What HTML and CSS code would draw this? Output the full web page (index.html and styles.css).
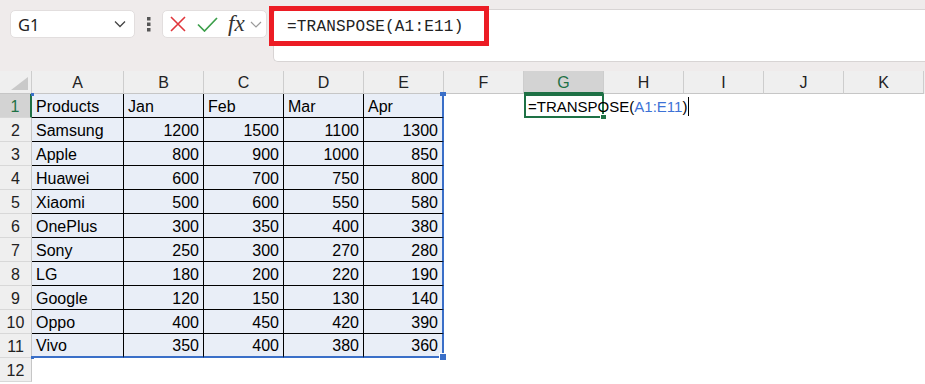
FILE: index.html
```html
<!DOCTYPE html>
<html>
<head>
  <title>Transpose Sheet</title>
  <link rel="stylesheet" href="styles.css">
</head>
<body>
  <div class="toolbar">
    <div class="namebox">
      <span>G1</span>
      <svg width="12" height="8" viewBox="0 0 12 8"><path d="M1 1.5 L6 6.5 L11 1.5" fill="none" stroke="#444" stroke-width="1.3"/></svg>
    </div>
    <div class="dots">
      <svg width="4" height="15" viewBox="0 0 4 15"><rect x="0" y="0" width="3.5" height="3.5" fill="#555"/><rect x="0" y="5.5" width="3.5" height="3.5" fill="#555"/><rect x="0" y="11" width="3.5" height="3.5" fill="#555"/></svg>
    </div>
    <div class="fxbox">
      <svg class="cancel" width="16" height="16" viewBox="0 0 16 16"><path d="M1 1 L15 15 M15 1 L1 15" stroke="#e0363c" stroke-width="1.6"/></svg>
      <svg class="enter" width="21" height="15" viewBox="0 0 21 15"><path d="M1 7.5 L7.5 14 L20 1" fill="none" stroke="#3c9f4b" stroke-width="1.7"/></svg>
      <span class="fx">fx</span>
      <svg class="more" width="12" height="7" viewBox="0 0 12 7"><path d="M1 1 L6 6 L11 1" fill="none" stroke="#9a9a9a" stroke-width="1.2"/></svg>
    </div>
    <div class="formula">
      <div class="ftext">=TRANSPOSE(A1:E11)</div>
      <div class="callout"></div>
    </div>
  </div>

  <div class="sheet">
    <div class="row head">
      <div class="corner"><svg width="17" height="13" viewBox="0 0 17 13"><path d="M17 0 L17 13 L0 13 Z" fill="#c9c9c9"/></svg></div>
      <div class="ch">A</div><div class="ch">B</div><div class="ch">C</div><div class="ch">D</div><div class="ch">E</div>
      <div class="ch">F</div><div class="ch sel">G</div><div class="ch">H</div><div class="ch">I</div><div class="ch">J</div><div class="ch">K</div>
    </div>

    <div class="row">
      <div class="rh sel">1</div>
      <div class="c r">Products<span class="hd tl"></span></div><div class="c r">Jan</div><div class="c r">Feb</div><div class="c r">Mar</div><div class="c r e">Apr<span class="hd tr"></span></div>
      <div class="c"></div>
      <div class="c g1">=TRANSPOSE(<span class="ref">A1:E11</span>)<span class="caret"></span><span class="ghandle"></span></div>
    </div>
    <div class="row">
      <div class="rh">2</div>
      <div class="c r">Samsung</div><div class="c r n">1200</div><div class="c r n">1500</div><div class="c r n">1100</div><div class="c r e n">1300</div>
    </div>
    <div class="row">
      <div class="rh">3</div>
      <div class="c r">Apple</div><div class="c r n">800</div><div class="c r n">900</div><div class="c r n">1000</div><div class="c r e n">850</div>
    </div>
    <div class="row">
      <div class="rh">4</div>
      <div class="c r">Huawei</div><div class="c r n">600</div><div class="c r n">700</div><div class="c r n">750</div><div class="c r e n">800</div>
    </div>
    <div class="row">
      <div class="rh">5</div>
      <div class="c r">Xiaomi</div><div class="c r n">500</div><div class="c r n">600</div><div class="c r n">550</div><div class="c r e n">580</div>
    </div>
    <div class="row">
      <div class="rh">6</div>
      <div class="c r">OnePlus</div><div class="c r n">300</div><div class="c r n">350</div><div class="c r n">400</div><div class="c r e n">380</div>
    </div>
    <div class="row">
      <div class="rh">7</div>
      <div class="c r">Sony</div><div class="c r n">250</div><div class="c r n">300</div><div class="c r n">270</div><div class="c r e n">280</div>
    </div>
    <div class="row">
      <div class="rh">8</div>
      <div class="c r">LG</div><div class="c r n">180</div><div class="c r n">200</div><div class="c r n">220</div><div class="c r e n">190</div>
    </div>
    <div class="row">
      <div class="rh">9</div>
      <div class="c r">Google</div><div class="c r n">120</div><div class="c r n">150</div><div class="c r n">130</div><div class="c r e n">140</div>
    </div>
    <div class="row">
      <div class="rh">10</div>
      <div class="c r">Oppo</div><div class="c r n">400</div><div class="c r n">450</div><div class="c r n">420</div><div class="c r e n">390</div>
    </div>
    <div class="row last">
      <div class="rh">11</div>
      <div class="c r">Vivo<span class="hd bl"></span></div><div class="c r n">350</div><div class="c r n">400</div><div class="c r n">380</div><div class="c r e n">360<span class="hd br"></span></div>
    </div>
    <div class="row">
      <div class="rh">12</div>
    </div>
  </div>
</body>
</html>
```

FILE: styles.css
```css
body {
  margin: 0;
  width: 925px;
  height: 384px;
  overflow: hidden;
  background: #fff;
  font-family: "Liberation Sans", Arial, sans-serif;
  color: #000;
}

/* formula bar */
.toolbar {
  display: flex;
  align-items: flex-start;
  height: 71px;
  box-sizing: border-box;
  padding: 10px 0 0 10px;
  background: #efebeb;
}

.namebox {
  width: 125px;
  height: 28px;
  box-sizing: border-box;
  display: flex;
  align-items: center;
  justify-content: space-between;
  padding: 0 8px 0 7px;
  background: #fff;
  border: 1px solid #e2dede;
  border-radius: 5px;
  font-family: "Noto Sans", sans-serif;
  font-size: 16.5px;
  color: #222;
}

.dots {
  width: 27px;
  height: 28px;
  display: flex;
  align-items: center;
  justify-content: center;
}

.fxbox {
  width: 105px;
  height: 28px;
  box-sizing: border-box;
  display: flex;
  align-items: center;
  padding-left: 7px;
  background: #fff;
  border: 1px solid #e2dede;
  border-radius: 5px;
}

.fxbox .enter {
  margin-left: 11px;
}

.fxbox .fx {
  margin-left: 10px;
  font-family: "Liberation Serif", serif;
  font-style: italic;
  font-size: 23px;
  line-height: 20px;
  color: #333;
}

.fxbox .more {
  margin-left: 5px;
}

.formula {
  position: relative;
  flex: 1;
  height: 53px;
  margin: -1px 0 0 6px;
  box-sizing: border-box;
  background: #fff;
  border: 1px solid #d8d4d4;
  border-right: none;
  border-radius: 5px 0 0 5px;
}

.ftext {
  padding: 7px 0 0 13px;
  font-family: "Liberation Mono", monospace;
  font-size: 16px;
  letter-spacing: 0.2px;
  line-height: 20px;
  color: #222;
}

.callout {
  position: absolute;
  left: -5px;
  top: -4px;
  width: 220px;
  height: 40px;
  box-sizing: border-box;
  border: 5px solid #ec1c24;
}

/* grid */
.row {
  display: grid;
  grid-template-columns: 32px 92px repeat(10, 80px);
  grid-template-rows: 24px;
  height: 24px;
}

.row.head {
  grid-template-rows: 23px;
  height: 23px;
  background: #efefef;
}

.corner,
.ch {
  box-sizing: border-box;
  border-right: 1px solid #cdcdcd;
  border-bottom: 1px solid #c6c6c6;
}

.corner {
  display: flex;
  align-items: flex-end;
  justify-content: flex-end;
  padding: 0 3px 3px 0;
}

.ch {
  padding-top: 1px;
  text-align: center;
  line-height: 21px;
  font-size: 16px;
  color: #222;
}

.ch.sel {
  background: #d3d3d3;
  color: #1e7145;
  border-bottom: 2px solid #1e7145;
}

.rh {
  box-sizing: border-box;
  padding-top: 2px;
  background: #efefef;
  border-right: 1px solid #c6c6c6;
  border-bottom: 1px solid #d8d8d8;
  text-align: center;
  line-height: 21px;
  font-size: 16px;
  color: #222;
}

.rh.sel {
  background: #d3d3d3;
  color: #1e7145;
  border-right: 2px solid #1e7145;
}

.c {
  position: relative;
  box-sizing: border-box;
  padding: 2px 4px 0;
  line-height: 21px;
  font-size: 16px;
  white-space: nowrap;
}

.c.r {
  background: #e9eef7;
  border-right: 1px solid #000;
  border-bottom: 1px solid #000;
}

.c.e {
  border-right: 2px solid #3a6fc8;
}

.row.last .c.r {
  border-bottom: 2px solid #3a6fc8;
  line-height: 20px;
}

.c.n {
  text-align: right;
}

/* range handles */
.hd {
  position: absolute;
  background: #3a6fc8;
}

.hd.tl { left: -1px; top: -1px; width: 3px; height: 3px; }
.hd.tr { right: -4px; top: -2px; width: 6px; height: 4px; }
.hd.bl { left: -1px; bottom: -3px; width: 3px; height: 3px; }
.hd.br { right: -5px; bottom: -5px; width: 6px; height: 6px; border: 1px solid #fff; }

.g1 {
  border: 2px solid #1e7145;
  padding: 1px 0 0 2px;
  line-height: 19px;
  font-size: 15px;
  overflow: visible;
  z-index: 1;
}

.g1 .ref {
  color: #3d72d6;
}

.caret {
  display: inline-block;
  width: 1px;
  height: 19px;
  margin-left: 1px;
  vertical-align: top;
  background: #000;
}

.ghandle {
  position: absolute;
  right: -5px;
  bottom: -4px;
  width: 5px;
  height: 4px;
  background: #1e7145;
  border: 1px solid #fff;
}
```
